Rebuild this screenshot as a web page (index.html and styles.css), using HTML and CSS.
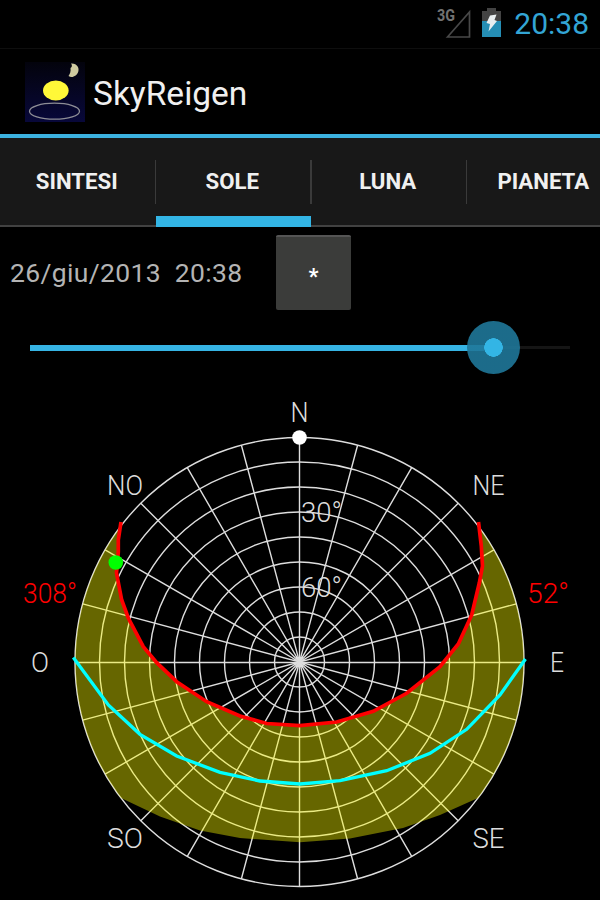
FILE: index.html
```
<!DOCTYPE html>
<html lang="it">
<head>
  <meta charset="UTF-8" />
  <meta name="viewport" content="width=device-width, initial-scale=1.0"/>
  <title>SkyReigen</title>
  <link rel="stylesheet" href="styles.css">
</head>
<body>
  <div class="status-bar">
    <svg class="signal" width="36" height="32" viewBox="0 0 36 32">
      <text x="1" y="15" textLength="18" lengthAdjust="spacingAndGlyphs">3G</text>
      <path d="M11.500 31 L33.500 6 V31 Z" fill="none" stroke="#484848" stroke-width="1.7"/>
    </svg>
    <svg class="battery" width="19" height="30" viewBox="0 0 19 30">
      <path d="M0 3 H5 V0 H14 V3 H19 V13 H0 Z" fill="#434343"/>
      <path d="M0 13 H19 V29 H0 Z" fill="#258eb5"/>
      <path d="M8 7.5 L14.5 6.5 L12.5 12 L15 13 L6.5 23.5 L8 16 L4.5 15 Z" fill="#e8eef0"/>
    </svg>
    <span class="clock">20:38</span>
  </div>

  <header class="action-bar">
    <svg class="app-icon" width="60" height="60" viewBox="0 0 60 60">
      <defs>
        <linearGradient id="night" x1="0" y1="0" x2="0" y2="1">
          <stop offset="0" stop-color="#03030c"/>
          <stop offset="1" stop-color="#08083a"/>
        </linearGradient>
      </defs>
      <rect width="60" height="60" fill="url(#night)"/>
      <path d="M46 1.500 C52 1 54.500 6 53.300 9.500 C52 14 47 16.500 43.500 14 C45 12 46 9 45.500 6 C47.500 5 47 2.500 46 1.500 Z" fill="#cfcba0"/>
      <ellipse cx="30.800" cy="28.500" rx="12.800" ry="10" fill="#fff838"/>
      <ellipse cx="29.500" cy="49.200" rx="25" ry="8" fill="none" stroke="#8e8e96" stroke-width="1.300"/>
    </svg>
    <h1>SkyReigen</h1>
  </header>

  <nav class="tabs">
    <a class="tab">SINTESI</a>
    <a class="tab active">SOLE</a>
    <a class="tab">LUNA</a>
    <a class="tab">PIANETA</a>
  </nav>

  <div class="date-row">
    <span class="date">26/giu/2013&nbsp; 20:38</span>
    <button class="now" type="button">*</button>
  </div>

  <div class="slider">
    <div class="progress"></div>
    <div class="rest"></div>
    <div class="thumb"></div>
  </div>

  <svg class="chart" width="600" height="515" viewBox="0 385 600 515">
    <g class="grid">
      <circle cx="299.5" cy="662" r="25"/>
      <circle cx="299.5" cy="662" r="50"/>
      <circle cx="299.5" cy="662" r="75"/>
      <circle cx="299.5" cy="662" r="100"/>
      <circle cx="299.5" cy="662" r="125"/>
      <circle cx="299.5" cy="662" r="150"/>
      <circle cx="299.5" cy="662" r="175"/>
      <circle cx="299.5" cy="662" r="200"/>
      <circle cx="299.5" cy="662" r="224.500"/>
      <path d="M299.500 437.500 V886.500 M75 662.500 H524"/>
      <path d="M241.400 445.200 L357.600 878.800 M187.300 467.600 L411.700 856.400 M140.800 503.300 L458.200 820.700"/>
      <path d="M105.100 549.800 L493.900 774.200 M82.700 603.900 L516.300 720.100"/>
      <path d="M357.600 445.200 L241.400 878.800 M411.700 467.600 L187.300 856.400 M458.200 503.300 L140.800 820.700"/>
      <path d="M493.900 549.800 L105.100 774.200 M516.300 603.900 L82.700 720.100"/>
    </g>

    <!-- altitude scale -->
    <text x="301" y="522" textLength="41" lengthAdjust="spacingAndGlyphs">30°</text>
    <text x="301" y="597" textLength="41" lengthAdjust="spacingAndGlyphs">60°</text>

    <!-- area swept by the sun over the year -->
    <path class="band" d="M119.500 528 A224.500 224.500 0 0 0 121 798 L160 816.500 L200 830.500 L240 838 L300 842.300 L350 838.500 L403 828 L440 815 L478 798 A224.500 224.500 0 0 0 479.500 528 L482.500 566 L479.300 583 L471.700 615 L458.300 644 L440 666.700 L406.700 693.300 L373.300 711.300 L336.700 721.500 L300 725 L266.700 723 L240 715.500 L206.700 701.700 L176.700 681.700 L156.700 662.700 L143.300 646.700 L128.300 618 L121.700 600 L116.500 573 L118.500 550 Z"/>

    <path class="winter" d="M73.300 657.500 L108.300 705 L140 734.300 L176.700 756 L220 772.300 L260 781 L300 784 L340 780.700 L386.700 770.700 L430 753.300 L466.700 729.300 L500 695 L525.500 659"/>
    <path class="summer" d="M121 522 L118.300 540 L118.300 552 L116.500 573 L121.700 600 L128.300 618 L143.300 646.700 L156.700 662.700 L176.700 681.700 L206.700 701.700 L240 716 L266.700 723.500 L300 725.700 L336.700 722 L373.300 711.300 L406.700 693.300 L440 666.700 L458.300 644 L471.700 615 L479.300 583 L482.500 566 L481.300 546 L478.500 522"/>
    <circle cx="299.500" cy="437.500" r="7.300" fill="#fff"/>
    <circle cx="115.800" cy="562.500" r="7.300" fill="#0f0"/>

    <text x="290.500" y="422" textLength="18" lengthAdjust="spacingAndGlyphs">N</text>
    <text x="107" y="495" textLength="36" lengthAdjust="spacingAndGlyphs">NO</text>
    <text x="472.500" y="495" textLength="32" lengthAdjust="spacingAndGlyphs">NE</text>
    <text x="31" y="672" textLength="18" lengthAdjust="spacingAndGlyphs">O</text>
    <text x="550" y="672" textLength="14" lengthAdjust="spacingAndGlyphs">E</text>
    <text x="107" y="848" textLength="36" lengthAdjust="spacingAndGlyphs">SO</text>
    <text x="472.500" y="848" textLength="32" lengthAdjust="spacingAndGlyphs">SE</text>
    <text class="azimuth" x="23" y="602.500" textLength="54" lengthAdjust="spacingAndGlyphs">308°</text>
    <text class="azimuth" x="527" y="602.500" textLength="42" lengthAdjust="spacingAndGlyphs">52°</text>
  </svg>
</body>
</html>
```
FILE: styles.css
```
* {
  box-sizing: border-box;
}
body {
  margin: 0;
  width: 600px;
  height: 900px;
  overflow: hidden;
  background: #000;
  color: #fff;
  font-family: Roboto, sans-serif;
}
.status-bar {
  display: flex;
  justify-content: flex-end;
  align-items: center;
  height: 49px;
  padding-right: 11px;
  border-bottom: 1px solid #0e0e0e;
}
.signal {
  margin: -4px 10px 0 0;
}
.signal text {
  font-size: 16px;
  font-weight: bold;
  fill: #727272;
}
.battery {
  margin: -2px 13px 0 0;
}
.clock {
  font-size: 30px;
  line-height: 48px;
  color: #33a5d5;
}
.action-bar {
  display: flex;
  align-items: center;
  height: 89px;
  padding: 1px 0 0 25px;
  border-bottom: 4px solid #3cb2e0;
}
.app-icon {
  margin-right: 7px;
}
h1 {
  margin: 0;
  padding: 3px 0 0 1px;
  font-size: 33.5px;
  font-weight: normal;
  color: #f0f0f0;
}
.tabs {
  display: flex;
  height: 89px;
  background: #181818;
  box-shadow: inset 0 -2px #424242;
  overflow: hidden;
}
.tab {
  position: relative;
  flex: 0 0 155.5px;
  padding-right: 2px;
  font-size: 22.2px;
  font-weight: bold;
  line-height: 87px;
  text-align: center;
  color: #f0f0f0;
}
.tab + .tab::before {
  content: "";
  position: absolute;
  left: -1px;
  top: 22px;
  width: 1.5px;
  height: 44px;
  background: #3a3a3a;
}
.tab.active {
  border-bottom: 11px solid #33b5e5;
}
.date-row {
  display: flex;
  align-items: center;
  height: 90px;
  padding-left: 10px;
}
.date {
  width: 266px;
  font-size: 26.5px;
  letter-spacing: 0.35px;
  white-space: nowrap;
  color: #b4b4b4;
}
.now {
  width: 75px;
  height: 75px;
  padding: 6px 0 0;
  border: 0;
  border-top: 2px solid #555;
  border-radius: 2px;
  background: #3b3c3a;
  color: #fff;
  font: bold 22px Roboto, sans-serif;
}
.slider {
  position: relative;
  display: flex;
  align-items: center;
  height: 68px;
  padding: 0 30px 7px;
}
.progress {
  width: 464px;
  height: 6px;
  background: #36b4e4;
}
.rest {
  flex: 1;
  height: 3px;
  background: #151515;
}
.thumb {
  position: absolute;
  left: 467px;
  top: 4px;
  width: 53px;
  height: 53px;
  border-radius: 50%;
  background: radial-gradient(circle, #33b5e5 9px, rgba(31, 119, 153, 0.9) 9.5px);
}
.chart {
  display: block;
}
.grid {
  fill: none;
  stroke: #dedede;
  stroke-width: 1.4;
}
.chart text {
  font-size: 28px;
  font-weight: 300;
  fill: #dcdcdc;
}
.chart .azimuth {
  fill: #f00;
}
.band {
  fill: #ff0;
  fill-opacity: 0.4;
}
.winter, .summer {
  fill: none;
  stroke: #0ff;
  stroke-width: 3.3;
}
.summer {
  stroke: #f00;
  stroke-width: 3.7;
}
```
